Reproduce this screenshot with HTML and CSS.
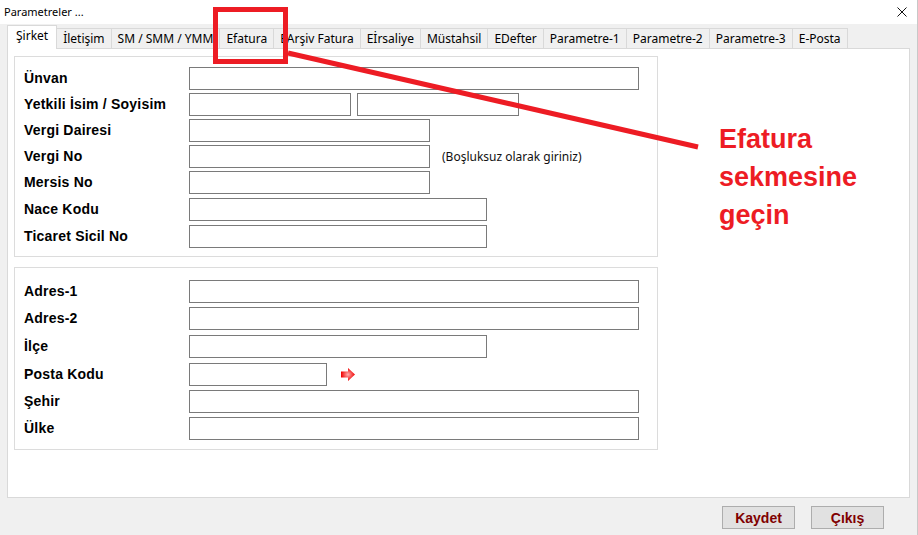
FILE: index.html
```html
<!DOCTYPE html>
<html lang="tr">
<head>
<meta charset="utf-8">
<title>Parametreler</title>
<link rel="stylesheet" href="styles.css">
</head>
<body>
<div class="window">
  <div class="titlebar">
    <span class="title">Parametreler ...</span>
    <svg class="close" width="10" height="10" viewBox="0 0 10 10"><path d="M0.5 0.5 L9.5 9.5 M9.5 0.5 L0.5 9.5" stroke="#111" stroke-width="1"/></svg>
  </div>
  <div class="content">
    <div class="tabs">
      <div class="tab selected">Şirket</div>
      <div class="tab">İletişim</div>
      <div class="tab">SM / SMM / YMM</div>
      <div class="tab">Efatura</div>
      <div class="tab">EArşiv Fatura</div>
      <div class="tab">Eİrsaliye</div>
      <div class="tab">Müstahsil</div>
      <div class="tab">EDefter</div>
      <div class="tab">Parametre-1</div>
      <div class="tab">Parametre-2</div>
      <div class="tab">Parametre-3</div>
      <div class="tab">E-Posta</div>
    </div>
    <div class="panel">
      <div class="group g1">
        <div class="row"><span class="label">Ünvan</span><span class="input w450"></span></div>
        <div class="row"><span class="label">Yetkili İsim / Soyisim</span><span class="input w162"></span><span class="input w162 second"></span></div>
        <div class="row"><span class="label">Vergi Dairesi</span><span class="input w241"></span></div>
        <div class="row"><span class="label">Vergi No</span><span class="input w241"></span><span class="hint">(Boşluksuz olarak giriniz)</span></div>
        <div class="row"><span class="label">Mersis No</span><span class="input w241"></span></div>
        <div class="row extra"><span class="label">Nace Kodu</span><span class="input w298"></span></div>
        <div class="row extra"><span class="label">Ticaret Sicil No</span><span class="input w298"></span></div>
      </div>
      <div class="group g2">
        <div class="row"><span class="label">Adres-1</span><span class="input w450"></span></div>
        <div class="row"><span class="label">Adres-2</span><span class="input w450"></span></div>
        <div class="row extra"><span class="label">İlçe</span><span class="input w298"></span></div>
        <div class="row extra"><span class="label">Posta Kodu</span><span class="input w138"></span>
          <svg class="arrow" width="14" height="13" viewBox="0 0 14 13">
            <defs><radialGradient id="ag" cx="0.5" cy="0.5" r="0.5"><stop offset="0" stop-color="#ffb0b0"/><stop offset="1" stop-color="#f00000"/></radialGradient></defs>
            <polygon points="0,3.5 7,3.5 7,0 14,6.5 7,13 7,9.5 0,9.5" fill="url(#ag)"/>
          </svg>
        </div>
        <div class="row"><span class="label">Şehir</span><span class="input w450"></span></div>
        <div class="row"><span class="label">Ülke</span><span class="input w450"></span></div>
      </div>
    </div>
  </div>
  <div class="footer">
    <button class="btn">Kaydet</button>
    <button class="btn">Çıkış</button>
  </div>
  <svg class="annot" width="918" height="535" viewBox="0 0 918 535">
    <rect x="215.5" y="9.5" width="70" height="52" fill="none" stroke="#ed1c24" stroke-width="5"/>
    <line x1="288" y1="53" x2="698" y2="147" stroke="#ed1c24" stroke-width="5"/>
  </svg>
  <div class="callout">Efatura<br>sekmesine<br>geçin</div>
</div>
</body>
</html>
```
FILE: styles.css
```css
* { box-sizing: border-box; }
html, body { margin: 0; padding: 0; }
body {
  width: 918px;
  height: 535px;
  overflow: hidden;
  background: #f0f0f0;
  font-family: "Noto Sans", "Open Sans", sans-serif;
  color: #000;
}
.window {
  position: relative;
  width: 918px;
  height: 535px;
  background: #f0f0f0;
  border-right: 1px solid #c8c8c8;
}
.titlebar {
  height: 24px;
  background: #fff;
  display: flex;
  align-items: center;
  justify-content: space-between;
  padding: 0 10px 0 4px;
}
.title {
  font-size: 11px;
  line-height: 14px;
}
.close { display: block; }
.content {
  padding-left: 7px;
}
.tabs {
  height: 24px;
  display: flex;
  align-items: flex-end;
}
.tab {
  height: 20px;
  border: 1px solid #d9d9d9;
  border-bottom: 0;
  padding: 0 6px;
  margin-left: -1px;
  font-size: 12px;
  line-height: 20px;
  white-space: nowrap;
  background: #f0f0f0;
}
.tab.selected {
  height: 24px;
  margin-left: 0;
  margin-bottom: -1px;
  padding: 0 8px 3px;
  line-height: 20px;
  background: #fff;
  position: relative;
  z-index: 1;
}
.panel {
  width: 903px;
  height: 450px;
  border: 1px solid #d9d9d9;
  background: #fff;
  padding: 7px 0 0 6px;
}
.group {
  width: 644px;
  border: 1px solid #dcdcdc;
  padding-left: 9px;
  display: flex;
  flex-direction: column;
}
.g1 {
  height: 201px;
  padding-top: 10px;
  gap: 3px;
}
.g2 {
  height: 183px;
  margin-top: 10px;
  padding-top: 12px;
  gap: 4px;
}
.row {
  display: flex;
  align-items: center;
  height: 23px;
}
.row.extra { margin-top: 1px; }
.label {
  width: 165px;
  flex: none;
  font-family: "Liberation Sans", Arial, sans-serif;
  font-weight: bold;
  font-size: 14px;
  line-height: 16px;
  letter-spacing: 0.2px;
  white-space: nowrap;
  margin-top: -1px;
}
.input {
  height: 23px;
  border: 1px solid #7a7a7a;
  background: #fff;
  flex: none;
}
.w450 { width: 450px; }
.w162 { width: 162px; }
.w241 { width: 241px; }
.w298 { width: 298px; }
.w138 { width: 138px; }
.second { margin-left: 6px; }
.hint {
  margin-left: 12px;
  font-size: 12px;
  color: #111;
  white-space: nowrap;
}
.arrow {
  display: block;
  margin-left: 14px;
  flex: none;
}
.footer {
  display: flex;
  justify-content: flex-end;
  gap: 16px;
  padding: 8px 33px 0 0;
}
.btn {
  width: 73px;
  height: 23px;
  margin: 0;
  padding: 0;
  border: 1px solid #adadad;
  background: #e1e1e1;
  font-family: "Liberation Sans", Arial, sans-serif;
  font-weight: bold;
  font-size: 14px;
  color: #800000;
  line-height: 20px;
}
.annot {
  position: absolute;
  left: 0;
  top: 0;
  pointer-events: none;
}
.callout {
  position: absolute;
  left: 719px;
  top: 120px;
  font-family: "Liberation Sans", Arial, sans-serif;
  font-weight: bold;
  font-size: 27px;
  line-height: 38px;
  color: #ed1c24;
}
```
